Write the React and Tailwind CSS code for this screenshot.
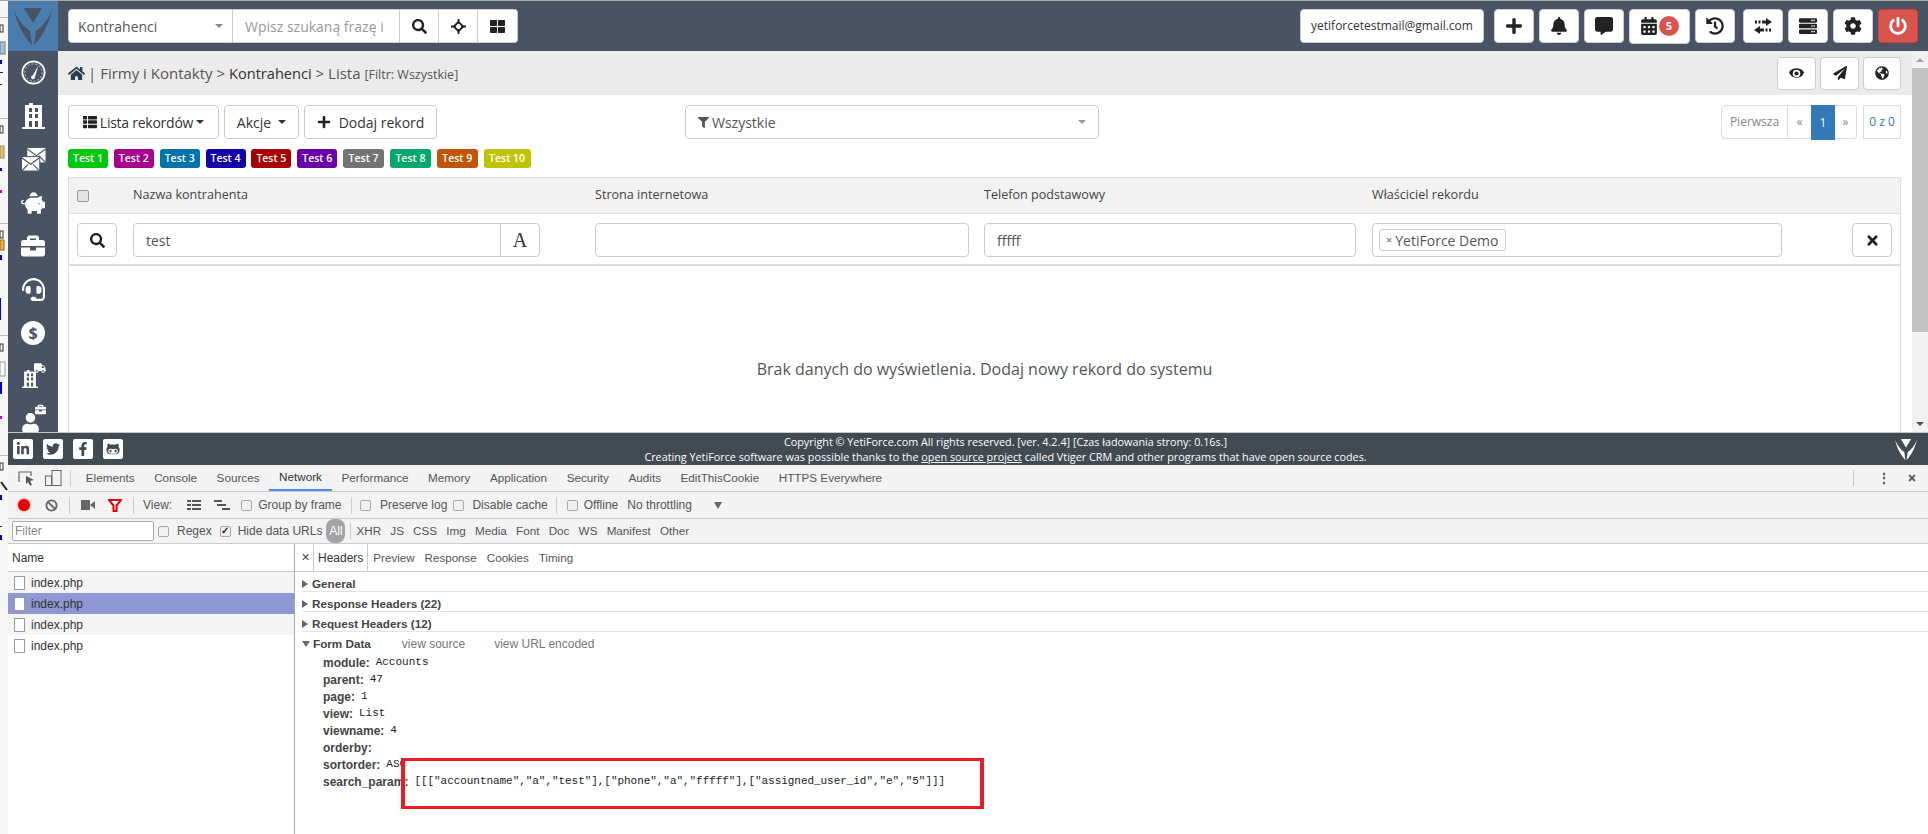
import React from "react";
import {
  FaSearch, FaThLarge, FaPlus, FaBell, FaCommentAlt, FaCalendarAlt, FaHistory,
  FaServer, FaCog, FaPowerOff, FaPaperPlane, FaGlobeAmericas, FaHome,
  FaThList, FaTimes, FaFilter, FaPiggyBank, FaBriefcase, FaHeadset,
  FaTruck, FaUser, FaLinkedinIn, FaTwitter, FaFacebookF, FaGithubAlt,
} from "react-icons/fa";

const Caret = ({ className = "" }) => (
  <span className={`inline-block w-0 h-0 border-x-[4px] border-x-transparent border-t-[4px] border-t-current ${className}`} />
);

function Gutter() {
  return (
    <svg className="w-2 h-[834px] shrink-0 bg-white block" viewBox="0 0 8 834">
      <rect width="8" height="834" fill="#f7f7f7" />
      <rect y="0" width="8" height="1" fill="#aaa" />
      {[17, 118, 223].map((y) => (
        <g key={y}>
          <rect x="0" y={y} width="8" height="1" fill="#bbb" />
          <rect x="0" y={y + 8} width="3" height="7" fill="none" stroke="#333" />
        </g>
      ))}
      <rect x="0" y="42" width="5" height="12" fill="#a9c2d8" stroke="#778" />
      <rect x="0" y="60" width="2" height="4" fill="#00c" />
      <rect x="0" y="72" width="3" height="1" fill="#222" />
      <rect x="0" y="84" width="2" height="1" fill="#222" />
      <rect x="0" y="146" width="4" height="12" fill="#e6c27a" stroke="#a86" />
      <rect x="0" y="168" width="2" height="3" fill="#00c" />
      <rect x="0" y="190" width="2" height="3" fill="#c0c" />
      <rect x="0" y="240" width="4" height="10" fill="#e0b060" stroke="#a60" />
      <rect x="0" y="255" width="2" height="5" fill="#00c" />
      <rect x="0" y="298" width="1" height="22" fill="#00c" />
      <rect x="0" y="335" width="8" height="1" fill="#bbb" />
      <rect x="0" y="344" width="3" height="7" fill="none" stroke="#333" />
      <rect x="0" y="362" width="5" height="14" fill="#fff" stroke="#999" />
      <rect x="0" y="382" width="2" height="12" fill="#00c" />
      <rect x="0" y="416" width="2" height="3" fill="#c0c" />
      <rect x="0" y="455" width="8" height="1" fill="#bbb" />
      <rect x="0" y="463" width="3" height="7" fill="none" stroke="#333" />
      <path d="M1 482l6 8" stroke="#222" strokeWidth="2" />
      <rect x="0" y="495" width="2" height="5" fill="#00c" />
      <rect x="0" y="526" width="2" height="1" fill="#222" />
      <rect x="0" y="535" width="2" height="5" fill="#00c" />
    </svg>
  );
}

const Logo = ({ fill, className }) => (
  <svg viewBox="3 4 42 41" className={className}>
    <path d="M15 6H33L24 21Z" fill={fill} />
    <path d="M5 8C9 18 15 25 21 29L23 43C15 35 8 22 5 8Z" fill={fill} />
    <path d="M43 8C39 18 33 25 27 29L25 43C33 35 40 22 43 8Z" fill={fill} />
  </svg>
);

const Gauge = () => (
  <svg viewBox="0 0 26 26" className="w-[25px] h-[25px]">
    <circle cx="13" cy="13" r="11.6" fill="none" stroke="#fff" strokeWidth="1.8" />
    <circle cx="13" cy="13" r="9" fill="none" stroke="#fff" strokeWidth="0.7" strokeDasharray="2 2" />
    <path d="M18 6L12 16.5L14.5 18Z" fill="#fff" />
    <circle cx="12.5" cy="18" r="2" fill="#fff" />
  </svg>
);

const Building = ({ className = "w-[23px] h-[26px]" }) => (
  <svg viewBox="0 0 23 26" className={className}>
    <path d="M3 2H7V0H11V2H20V24H23V26H0V24H3Z" fill="#fff" />
    <path d="M7 5H10V9H7ZM13 5H16V9H13ZM7 11H10V15H7ZM13 11H16V15H13ZM7 18H10V24H7ZM13 18H16V24H13Z" fill="#4a5364" />
  </svg>
);

const Envelopes = () => (
  <svg viewBox="0 0 25 26" className="w-[25px] h-[25px]">
    <rect x="6" y="1" width="19" height="15" fill="#fff" />
    <path d="M6 2L15.5 9L25 2M6 16L13 9M25 16L18 9" stroke="#4a5364" strokeWidth="1.2" fill="none" />
    <rect x="0" y="10" width="19" height="15" fill="#fff" stroke="#4a5364" />
    <path d="M0 11L9.5 18L19 11M0 25L7 18M19 25L12 18" stroke="#4a5364" strokeWidth="1.2" fill="none" />
  </svg>
);

const Crosshair = () => (
  <svg viewBox="0 0 16 16" className="w-[15px] h-[15px]">
    <path d="M8 3L13 8L8 13L3 8Z" fill="none" stroke="#222" strokeWidth="2" />
    <path d="M8 0V5M8 11V16M0 8H5M11 8H16" stroke="#222" strokeWidth="2" />
  </svg>
);

const RoundEye = () => (
  <svg viewBox="0 0 16 16" className="w-[15px] h-[15px]">
    <path d="M0 7C3 1 13 1 16 7C14 14 3 15 0 7Z" fill="#222" />
    <circle cx="8" cy="8" r="4" fill="#fff" />
    <circle cx="8" cy="8" r="2.2" fill="#222" />
  </svg>
);

const Transfer = () => (
  <svg viewBox="0 0 18 18" className="w-[18px] h-[18px]">
    <path d="M12 1L18 5L12 9V6.5H8V3.5H12Z" fill="#222" />
    <path d="M6 9L0 13L6 17V14.5H10V11.5H6Z" fill="#222" />
    <path d="M1 3.5H3V6.5H1ZM4.5 3.5H6.5V6.5H4.5ZM11.5 11.5H13.5V14.5H11.5ZM15 11.5H17V14.5H15Z" fill="#222" />
  </svg>
);

function Sidebar() {
  const cls = "h-[43.4px] flex items-center justify-center text-white shrink-0 relative";
  return (
    <div className="w-[50px] shrink-0 bg-[#4a5364] flex flex-col overflow-hidden">
      <div className="h-[50px] bg-[#4a7cae] flex items-center justify-center shrink-0">
        <Logo fill="#4a5364" className="w-[42px] h-[41px]" />
      </div>
      <div>
        <div className={cls}><Gauge /></div>
        <div className={cls}><Building /></div>
        <div className={cls}><Envelopes /></div>
        <div className={cls}><FaPiggyBank size={24} /></div>
        <div className={cls}><FaBriefcase size={24} /></div>
        <div className={cls}><FaHeadset size={23} /></div>
        <div className={cls}><span className="w-6 h-6 rounded-full bg-white text-[#4a5364] flex items-center justify-center text-[16px] font-bold">$</span></div>
        <div className={cls}><Building className="w-[16px] h-[18px] mt-[6px] mr-[6px]" /><span className="absolute top-[7px] left-[26px]"><FaTruck size={12} /></span></div>
        <div className={cls}><FaUser size={19} className="mt-[6px] mr-[6px]" /><span className="absolute top-[6px] left-[27px]"><FaBriefcase size={11} /></span></div>
      </div>
    </div>
  );
}

const TopBtn = ({ children, className = "w-10" }) => (
  <div className={`h-[34px] bg-white border border-[#ccc] rounded-[4px] flex items-center justify-center text-[#222] text-[18px] shrink-0 ${className}`}>{children}</div>
);

function TopBar() {
  return (
    <div className="h-[50px] shrink-0 bg-[#4a5364] flex items-center pl-[10px] pr-[10px]">
      <div className="flex h-[34px] w-[450px] shrink-0">
        <div className="w-[165px] bg-white rounded-l-[4px] border border-[#ccc] flex items-center justify-between px-[9px] text-[14px] text-[#555]">
          <span>Kontrahenci</span><Caret className="text-[#888]" />
        </div>
        <div className="w-[167px] bg-white border-y border-r border-[#ccc] flex items-center pl-[12px] text-[14px] text-[#999] whitespace-nowrap overflow-hidden">Wpisz szukaną frazę i</div>
        <div className="w-[39px] bg-white border-y border-r border-[#ccc] flex items-center justify-center text-[#222] text-[15px]"><FaSearch /></div>
        <div className="w-[39px] bg-white border-y border-r border-[#ccc] flex items-center justify-center"><Crosshair /></div>
        <div className="w-[40px] bg-white border-y border-r border-[#ccc] rounded-r-[4px] flex items-center justify-center text-[#222] text-[15px]"><FaThLarge /></div>
      </div>
      <div className="flex-1" />
      <div className="h-[34px] w-[184px] bg-white border border-[#ccc] rounded-[4px] flex items-center justify-center text-[12px] text-[#333] mr-[10px] shrink-0">yetiforcetestmail@gmail.com</div>
      <div className="flex gap-[5px] items-center">
        <TopBtn><FaPlus /></TopBtn>
        <TopBtn><FaBell /></TopBtn>
        <TopBtn><FaCommentAlt /></TopBtn>
        <TopBtn className="w-[61px] h-[35px] gap-[1px]">
          <FaCalendarAlt />
          <span className="w-5 h-5 rounded-full bg-[#d9534f] text-white text-[11px] font-bold flex items-center justify-center">5</span>
        </TopBtn>
        <TopBtn><FaHistory /></TopBtn>
        <TopBtn className="w-10 ml-[3px]"><Transfer /></TopBtn>
        <TopBtn><FaServer /></TopBtn>
        <TopBtn><FaCog /></TopBtn>
        <div className="w-10 h-[34px] bg-[#d9534f] border border-[#d43f3a] rounded-[4px] flex items-center justify-center text-white text-[18px]"><FaPowerOff /></div>
      </div>
    </div>
  );
}

function Breadcrumb() {
  return (
    <div className="h-[44px] shrink-0 bg-[#ebebeb] flex items-center pl-[10px] pr-[11px] text-[#555]">
      <FaHome className="text-[#2c3e50] text-[17px] mr-[3px]" />
      <span className="text-[15px] whitespace-nowrap">| Firmy i Kontakty &gt; <span className="text-[#333] text-[14.6px]">Kontrahenci</span> &gt; Lista <span className="text-[12.5px]">[Filtr: Wszystkie]</span></span>
      <div className="flex-1" />
      <div className="flex gap-[4px]">
        {[<RoundEye />, <FaPaperPlane />, <FaGlobeAmericas />].map((ic, i) => (
          <div key={i} className={`h-[33px] bg-white border border-[#ccc] rounded-[4px] flex items-center justify-center text-[14px] text-[#222] ${i === 2 ? "w-[38px]" : "w-[39px]"}`}>{ic}</div>
        ))}
      </div>
    </div>
  );
}

const BtnOutline = ({ children, className }) => (
  <div className={`h-[34px] bg-white border border-[#ccc] rounded-[4px] flex items-center justify-center text-[14px] text-[#333] whitespace-nowrap ${className}`}>{children}</div>
);

function ActionsRow() {
  return (
    <div className="flex items-start h-[35px] mt-[10px] shrink-0">
      <BtnOutline className="w-[151px] gap-[3px]"><FaThList className="text-[14px] text-[#222]" /><span className="tracking-[-0.25px]">Lista rekordów</span><Caret /></BtnOutline>
      <BtnOutline className="w-[75px] ml-[5px] gap-[7px]">Akcje<Caret /></BtnOutline>
      <BtnOutline className="w-[133px] ml-[5px] gap-[8px]"><FaPlus className="text-[14px] text-[#222]" />Dodaj rekord</BtnOutline>
      <div className="ml-[248px] w-[414px] h-[34px] bg-white border border-[#ccc] rounded-[4px] flex items-center px-[12px] text-[14px] text-[#555]">
        <FaFilter className="text-[11px] mr-[3px]" /> Wszystkie
        <div className="flex-1" /><Caret className="text-[#999]" />
      </div>
      <div className="flex-1" />
      <div className="flex h-[35px] text-[12px]">
        <div className="w-[67px] h-[34px] border border-[#ddd] rounded-l-[4px] flex items-center justify-center text-[#888]">Pierwsza</div>
        <div className="w-[23px] h-[34px] border-y border-[#ddd] flex items-center justify-center text-[#888]">«</div>
        <div className="w-[24px] h-[35px] bg-[#337ab7] flex items-center justify-center text-white">1</div>
        <div className="w-[22px] h-[34px] border-y border-r border-[#ddd] rounded-r-[4px] flex items-center justify-center text-[#888]">»</div>
        <div className="w-[38px] h-[34px] ml-[6px] border border-[#ddd] flex items-center justify-center text-[#337ab7]">0 z 0</div>
      </div>
    </div>
  );
}

const labels = [
  ["Test 1", "bg-[#00c80f]", "w-[40px]"], ["Test 2", "bg-[#a8008c]", "w-[40px]"], ["Test 3", "bg-[#0073a8]", "w-[40px]"],
  ["Test 4", "bg-[#1400a8]", "w-[40px]"], ["Test 5", "bg-[#a80000]", "w-[40px]"], ["Test 6", "bg-[#6a00a8]", "w-[40px]"],
  ["Test 7", "bg-[#737373]", "w-[41px]"], ["Test 8", "bg-[#00a86b]", "w-[41px]"], ["Test 9", "bg-[#c25608]", "w-[41px]"],
  ["Test 10", "bg-[#bfc400]", "w-[47px]"],
];

function Labels() {
  return (
    <div className="flex gap-[5.85px] h-[19px] mt-[9px] shrink-0">
      {labels.map(([t, bg, w]) => (
        <div key={t} className={`${bg} ${w} rounded-[3px] text-white text-[10.5px] font-semibold flex items-center justify-center whitespace-nowrap`}>{t}</div>
      ))}
    </div>
  );
}

const inputCls = "h-[34px] bg-white border border-[#ccc] rounded-[4px] flex items-center";

function DataTable() {
  return (
    <div className="mt-[9px] flex-1 min-h-0 flex flex-col border-x border-[#ddd]">
      <div className="h-[37px] shrink-0 bg-[#f2f2f2] border-y border-[#ddd] grid grid-cols-[64px_462px_389px_388px_480px_1fr] items-center text-[12.6px] font-medium text-[#444]">
        <div className="pl-[8px]"><div className="w-[12px] h-[12px] bg-[#e4e4e4] border border-[#999] rounded-[2px]" /></div>
        <div>Nazwa kontrahenta</div>
        <div>Strona internetowa</div>
        <div>Telefon podstawowy</div>
        <div>Właściciel rekordu</div>
        <div />
      </div>
      <div className="h-[52px] shrink-0 border-b-[2px] border-[#ddd] grid grid-cols-[64px_462px_389px_388px_480px_1fr] items-start pt-[9px] text-[14px] text-[#555]">
        <div className="pl-[8px]"><div className={`${inputCls} w-[40px] justify-center text-[#222] text-[15px]`}><FaSearch /></div></div>
        <div className={`${inputCls} w-[407px]`}>
          <span className="flex-1 pl-[12px]">test</span>
          <span className="w-[39px] h-full border-l border-[#ccc] flex items-center justify-center text-[#333] text-[20px] font-['Liberation_Serif',serif]">A</span>
        </div>
        <div className={`${inputCls} w-[374px]`} />
        <div className={`${inputCls} w-[372px] pl-[12px]`}>fffff</div>
        <div className={`${inputCls} w-[410px] pl-[6px]`}>
          <span className="h-[22px] border border-[#ccc] rounded-[3px] px-[6px] flex items-center gap-[3px] whitespace-nowrap text-[14px]"><span className="text-[#888] text-[11px] font-bold">×</span>YetiForce Demo</span>
        </div>
        <div className={`${inputCls} w-[40px] justify-center text-[#222] text-[15px]`}><FaTimes /></div>
      </div>
      <div className="flex-1 flex justify-center pt-[93px] text-[16px] text-[#555] whitespace-nowrap leading-[20px]">Brak danych do wyświetlenia. Dodaj nowy rekord do systemu</div>
    </div>
  );
}

function Scrollbar() {
  return (
    <div className="w-[16px] shrink-0 bg-[#f1f1f1] flex flex-col items-center">
      <div className="h-[17px] flex items-center shrink-0 text-[#a3a3a3]"><span className="w-0 h-0 border-x-[4px] border-x-transparent border-b-[4px] border-b-current" /></div>
      <div className="w-full h-[264px] bg-[#c1c1c1] shrink-0" />
      <div className="flex-1" />
      <div className="h-[17px] flex items-center shrink-0 text-[#505050]"><Caret /></div>
    </div>
  );
}

function Footer() {
  const Soc = ({ children }) => <div className="w-5 h-5 bg-white rounded-[2px] flex items-center justify-center text-[#424a52] text-[14px]">{children}</div>;
  return (
    <div className="h-[33px] shrink-0 bg-[#424a52] border-t border-[#c8c8c8] flex items-center">
      <div className="flex gap-[10px] pl-[5px]">
        <Soc><FaLinkedinIn /></Soc><Soc><FaTwitter /></Soc><Soc><FaFacebookF /></Soc><Soc><FaGithubAlt /></Soc>
      </div>
      <div className="flex-1 flex flex-col items-center text-white text-[10.8px] leading-[15px] whitespace-nowrap pr-[6px]">
        <div>Copyright © YetiForce.com All rights reserved. [ver. 4.2.4] [Czas ładowania strony: 0.16s.]</div>
        <div>Creating YetiForce software was possible thanks to the <span className="underline">open source project</span> called Vtiger CRM and other programs that have open source codes.</div>
      </div>
      <Logo fill="#fff" className="w-[24px] h-[27px] mr-[10px]" />
    </div>
  );
}

const Chk = ({ on }) => (
  <span className={`w-[11px] h-[11px] border border-[#aaa] rounded-[2px] bg-[#f0f0f0] flex items-center justify-center text-[10px] leading-none text-[#222] shrink-0 ${on ? "font-bold" : ""}`}>{on ? "✓" : ""}</span>
);
const Sep = () => <span className="block w-px h-[17px] bg-[#ccc] shrink-0" />;

function DevTools() {
  const tabs = ["Elements", "Console", "Sources", "Network", "Performance", "Memory", "Application", "Security", "Audits", "EditThisCookie", "HTTPS Everywhere"];
  const types = ["XHR", "JS", "CSS", "Img", "Media", "Font", "Doc", "WS", "Manifest", "Other"];
  const rows = [["module:", "Accounts"], ["parent:", "47"], ["page:", "1"], ["view:", "List"], ["viewname:", "4"], ["orderby:", ""], ["sortorder:", "ASC"]];
  return (
    <div className="flex-1 min-h-0 flex flex-col bg-white text-[12px] text-[#555] font-['Liberation_Sans',sans-serif] relative">
      <div className="h-[27px] shrink-0 bg-[#f3f3f3] border-b border-[#ccc] flex items-center">
        <svg viewBox="0 0 44 16" className="w-[44px] h-[16px] ml-[10px]">
          <path d="M1 12V2H13V6" fill="none" stroke="#666" strokeWidth="1.2" />
          <path d="M8 6L16 10L12 11L14 15L12 15.5L10 12L8 14Z" fill="#555" />
          <rect x="34" y="0.5" width="9" height="15" fill="none" stroke="#666" />
          <rect x="27.5" y="6" width="6" height="9.5" fill="none" stroke="#666" />
        </svg>
        <span className="w-px h-[16px] bg-[#ccc] ml-[8px] mr-[5px]" />
        {tabs.map((t) => (
          <div key={t} className={`h-[26px] px-[9.8px] flex items-center text-[11.7px] whitespace-nowrap ${t === "Network" ? "border-b-2 border-[#4c8ef5] text-[#333]" : ""}`}>{t}</div>
        ))}
        <div className="flex-1" />
        <span className="w-px h-[16px] bg-[#ccc]" />
        <span className="text-[#444] ml-[24px] font-bold leading-none">⋮</span>
        <span className="ml-[17px] mr-[11px] text-[#555]"><FaTimes size={10} /></span>
      </div>
      <div className="h-[27px] shrink-0 bg-[#f3f3f3] border-b border-[#ccc] flex items-center whitespace-nowrap">
        <span className="w-[12px] h-[12px] rounded-full bg-[#e60000] ml-[10px] shadow-[0_0_3px_#e66]" />
        <svg viewBox="0 0 14 14" className="w-[13px] h-[13px] ml-[15px]"><circle cx="7" cy="7" r="5.5" fill="none" stroke="#666" strokeWidth="2" /><path d="M3 3L11 11" stroke="#666" strokeWidth="2" /></svg>
        <span className="ml-[11px]"><Sep /></span>
        <svg viewBox="0 0 14 10" className="w-[14px] h-[10px] ml-[11px]"><rect width="9" height="10" fill="#666" /><path d="M9 5L14 1V9Z" fill="#666" /></svg>
        <svg viewBox="0 0 14 13" className="w-[14px] h-[13px] ml-[13px]"><path d="M1 1H13L8.5 6.5V12H5.5V6.5Z" fill="#fff" stroke="#e00000" strokeWidth="2" /></svg>
        <span className="ml-[11px]"><Sep /></span>
        <span className="ml-[9px]">View:</span>
        <svg viewBox="0 0 14 10" className="w-[14px] h-[10px] ml-[15px]"><path d="M0 0H4V2H0ZM5 0H14V2H5ZM0 4H4V6H0ZM5 4H14V6H5ZM0 8H4V10H0ZM5 8H14V10H5Z" fill="#555" /></svg>
        <svg viewBox="0 0 16 10" className="w-[16px] h-[10px] ml-[13px]"><path d="M0 0H8V2H0ZM3 4H12V6H3ZM8 8H16V10H8Z" fill="#555" /></svg>
        <span className="ml-[11px]"><Chk /></span>
        <span className="ml-[6px]">Group by frame</span>
        <span className="ml-[9px]"><Sep /></span>
        <span className="ml-[8.5px]"><Chk /></span>
        <span className="ml-[9px]">Preserve log</span>
        <span className="ml-[6px]"><Chk /></span>
        <span className="ml-[8px]">Disable cache</span>
        <span className="ml-[8px]"><Sep /></span>
        <span className="ml-[10px]"><Chk /></span>
        <span className="ml-[6px]">Offline</span>
        <span className="ml-[9px]">No throttling</span>
        <span className="ml-[22px] text-[#666]"><span className="block w-0 h-0 border-x-[4px] border-x-transparent border-t-[7px] border-t-current" /></span>
      </div>
      <div className="h-[25px] shrink-0 bg-[#f3f3f3] border-b border-[#ccc] flex items-center whitespace-nowrap">
        <div className="ml-[4px] w-[142px] h-[20px] bg-white border border-[#aaa] rounded-[2px] px-[2px] flex items-center text-[#888]">Filter</div>
        <span className="ml-[4px]"><Chk /></span>
        <span className="ml-[8px]">Regex</span>
        <span className="ml-[8px]"><Chk on /></span>
        <span className="ml-[7px]">Hide data URLs</span>
        <span className="ml-[4px] w-[19px] h-[24px] rounded-[8px] bg-[#a3a3a3] text-white flex items-center justify-center">All</span>
        <span className="ml-[5px] mr-[5px]"><Sep /></span>
        <div className="flex gap-[9.2px] text-[11.7px]">{types.map((t) => <span key={t}>{t}</span>)}</div>
      </div>
      <div className="flex-1 min-h-0 flex">
        <div className="w-[287px] shrink-0 border-r border-[#aaa]">
          <div className="h-[28px] border-b border-[#ccc] pl-[4px] flex items-center text-[#333] bg-[#fff]">Name</div>
          {[0, 1, 2, 3].map((i) => (
            <div key={i} className={`h-[21px] flex items-center pl-[6px] gap-[6px] text-[#333] ${i === 1 ? "bg-[#8f97d4]" : i % 2 === 0 ? "bg-[#f5f5f5]" : "bg-white"}`}>
              <span className="w-[11px] h-[14px] bg-white border border-[#999] shrink-0" />index.php
            </div>
          ))}
        </div>
        <div className="flex-1 min-w-0 flex flex-col">
          <div className="h-[28px] shrink-0 border-b border-[#ccc] flex items-end pl-[3px]">
            <span className="h-[27px] flex items-center w-[15px] justify-center text-[#444] text-[14px]">×</span>
            <span className="h-[28px] px-[4px] border-x border-t border-[#ccc] flex items-center text-[#333] bg-white">Headers</span>
            <div className="flex h-[27px] items-center gap-[10px] ml-[5px] text-[11.6px]">
              <span>Preview</span><span>Response</span><span>Cookies</span><span>Timing</span>
            </div>
          </div>
          <div className="pl-[7px]">
            {["General", "Response Headers (22)", "Request Headers (12)"].map((t) => (
              <div key={t} className="h-[20px] border-b border-[#e3e3e3] flex items-center pt-[4px] font-bold text-[#444] text-[11.7px]">
                <span className="w-0 h-0 border-y-[4px] border-y-transparent border-l-[6px] border-l-[#666] mr-[4px]" />{t}
              </div>
            ))}
            <div className="h-[20px] flex items-center pt-[3px] text-[12px] whitespace-nowrap">
              <span className="w-0 h-0 border-x-[4px] border-x-transparent border-t-[6px] border-t-[#666] mr-[3px]" />
              <span className="font-bold text-[#444] text-[11.7px]">Form Data</span>
              <span className="ml-[31px] text-[#777]">view source</span>
              <span className="ml-[29px] text-[#777]">view URL encoded</span>
            </div>
            <div className="pl-[21px] pt-[2px] text-[12px] whitespace-nowrap text-[#333]">
              {rows.map(([k, v]) => (
                <div key={k} className="h-[17px] flex items-center">
                  <span className="font-bold text-[#444]">{k}</span>
                  <span className="ml-[6px] text-[11px] font-['Liberation_Mono',monospace] text-[#222]">{v}</span>
                </div>
              ))}
              <div className="h-[17px] flex items-center">
                <span className="font-bold text-[#444]">search_param:</span>
                <span className="ml-[6px] text-[11px] font-['Liberation_Mono',monospace] text-[#222] tracking-[-0.05px]">{'[[["accountname","a","test"],["phone","a","fffff"],["assigned_user_id","e","5"]]]'}</span>
              </div>
            </div>
          </div>
        </div>
      </div>
      <div className="absolute left-[393px] top-[293px] w-[583px] h-[51px] border-x-[4px] border-y-[3.5px] border-[#ed1c24]" />
    </div>
  );
}

export default function App() {
  return (
    <div className="w-[1928px] h-[834px] flex overflow-hidden bg-white font-['Open_Sans',sans-serif]">
      <Gutter />
      <div className="flex-1 min-w-0 flex flex-col">
        <div className="h-px bg-[#aaa] shrink-0" />
        <div className="h-[431px] shrink-0 flex">
          <Sidebar />
          <div className="flex-1 min-w-0 flex flex-col">
            <TopBar />
            <div className="flex-1 min-h-0 flex">
              <div className="flex-1 min-w-0 flex flex-col">
                <Breadcrumb />
                <div className="flex-1 min-h-0 flex flex-col pl-[10px] pr-[11px]">
                  <ActionsRow />
                  <Labels />
                  <DataTable />
                </div>
              </div>
              <Scrollbar />
            </div>
          </div>
        </div>
        <Footer />
        <DevTools />
      </div>
    </div>
  );
}
